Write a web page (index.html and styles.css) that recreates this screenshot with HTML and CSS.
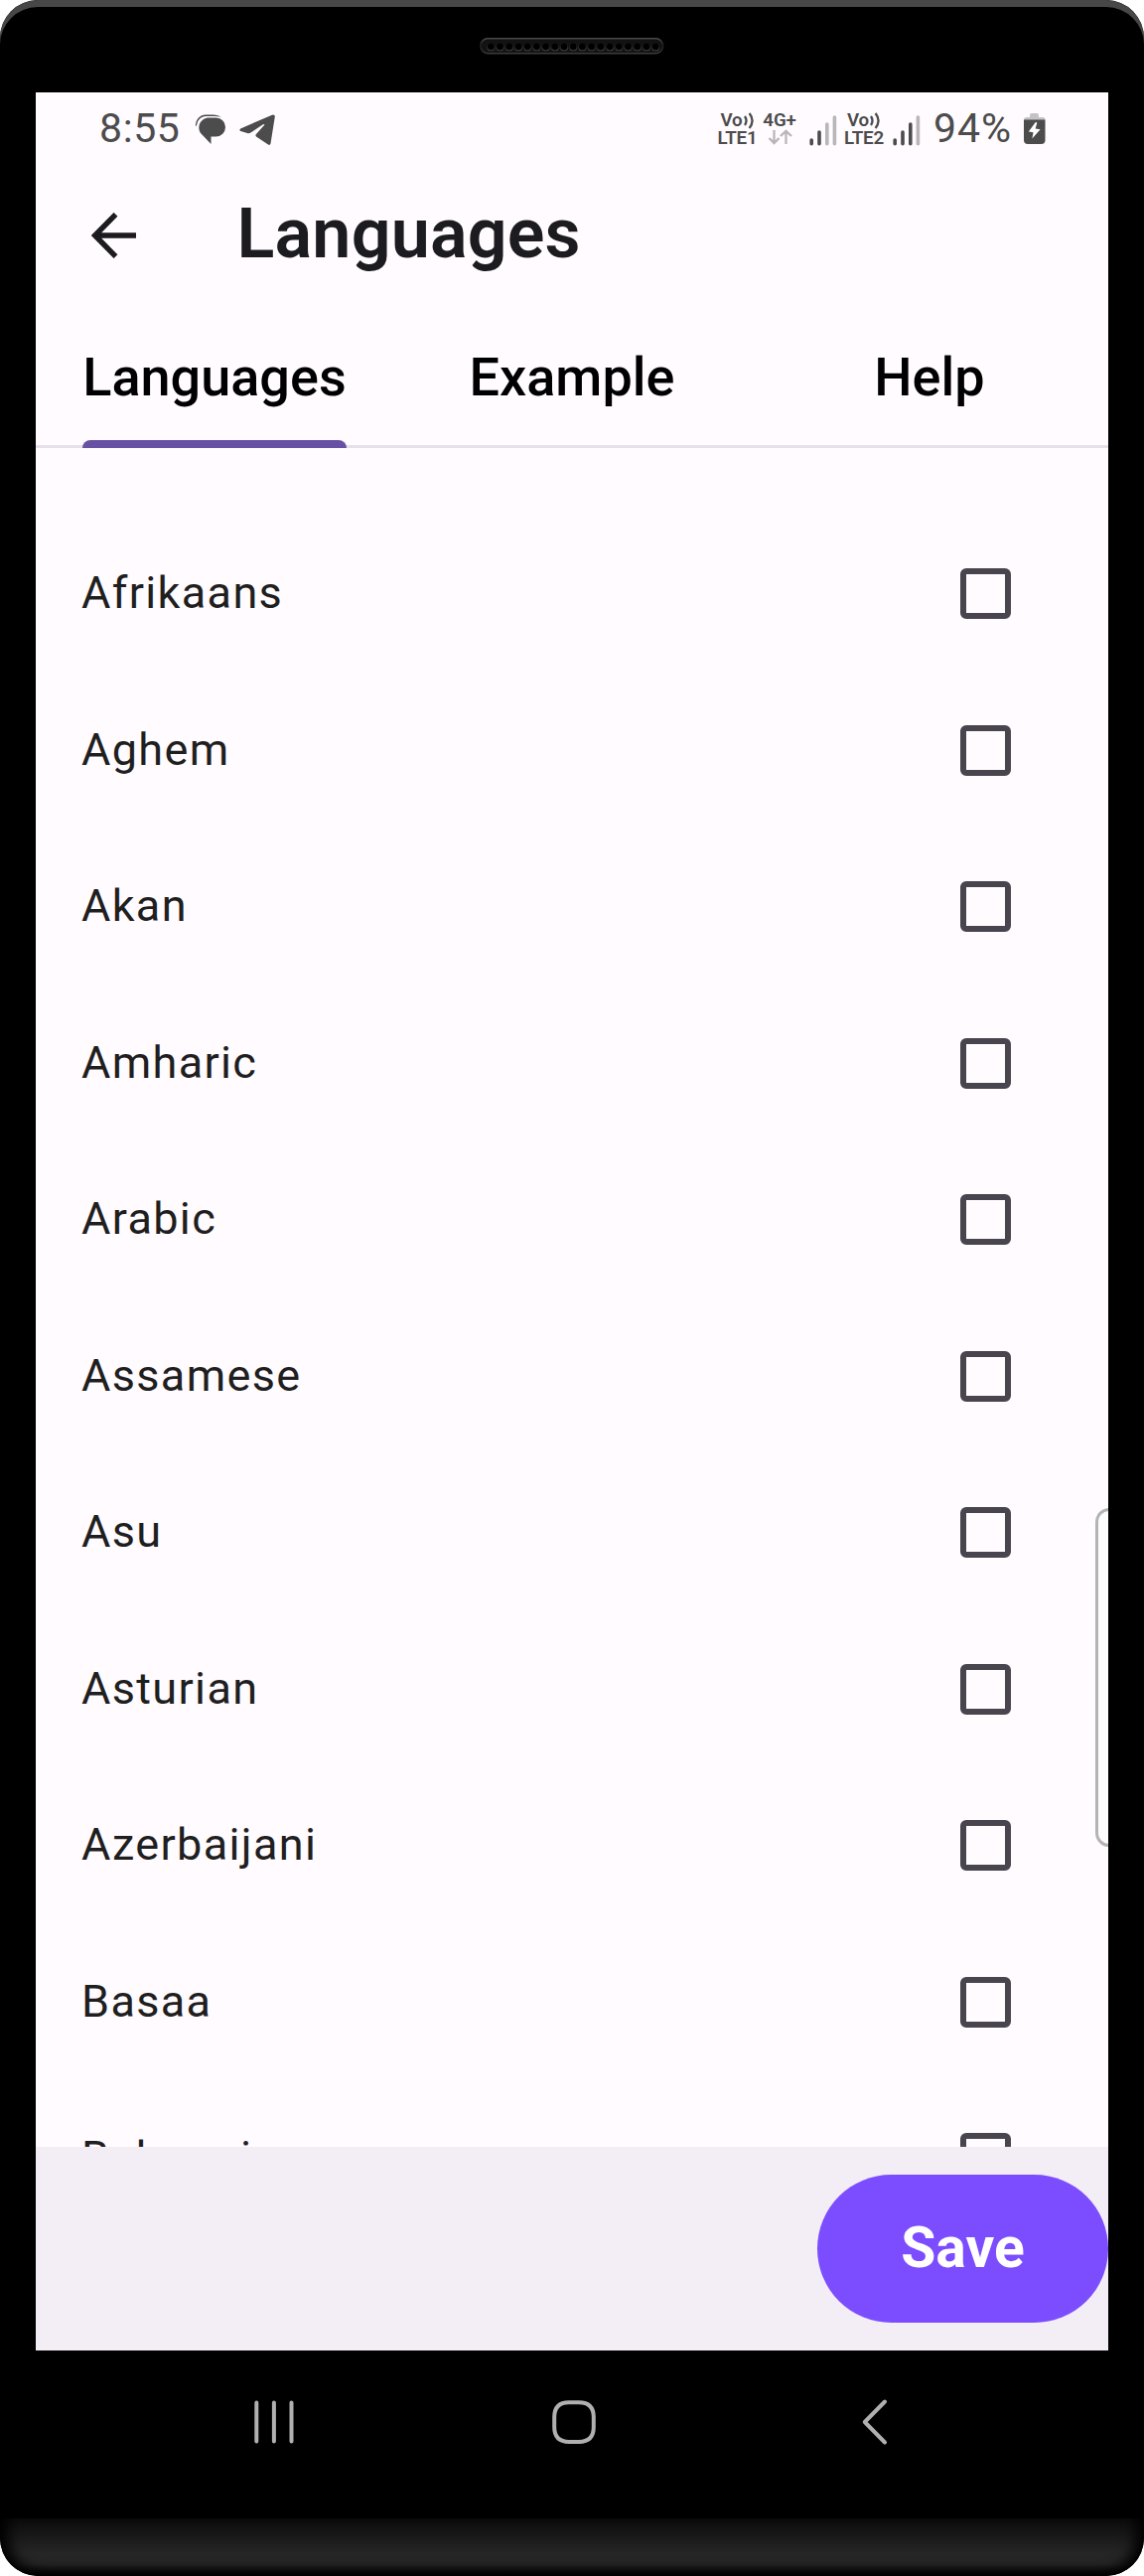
FILE: index.html
```html
<!DOCTYPE html>
<html lang="en">
<head>
<meta charset="utf-8">
<title>Languages</title>
<link rel="stylesheet" href="styles.css">
</head>
<body>
<div class="phone">
  <div class="bezel-top">
    <svg class="speaker" width="186" height="17" viewBox="0 0 186 17">
      <defs>
        <pattern id="holes" x="7" y="4" width="9.21" height="12" patternUnits="userSpaceOnUse">
          <circle cx="4.4" cy="5.4" r="3.9" fill="#4a4a4a"/>
          <circle cx="4.4" cy="4.8" r="3.6" fill="#000"/>
        </pattern>
        <linearGradient id="rim" x1="0" y1="0" x2="0" y2="1">
          <stop offset="0" stop-color="#4a4a4a"/><stop offset=".5" stop-color="#1c1c1c"/><stop offset="1" stop-color="#3c3c3c"/>
        </linearGradient>
      </defs>
      <rect x=".75" y=".75" width="184" height="15" rx="7.5" fill="#121212" stroke="url(#rim)" stroke-width="1.5"/>
      <rect x="7" y="4" width="174.9" height="10" fill="url(#holes)"/>
    </svg>
  </div>
  <main class="screen">
    <div class="status">
      <span class="clock">8:55</span>
      <svg class="chat" width="32" height="32" viewBox="0 0 32 32">
        <path d="M1 13.5 A10.5 10.5 0 0 1 11 1.5 H19 Q24 1.5 27 4.2 Q24 3 20 3 H12 A9.5 9.5 0 0 0 2.2 11.5Z" fill="#4c4c4c"/>
        <path d="M13 4.5 H21.5 A9.5 9.5 0 0 1 21.5 23.5 H16.5 V31 L6 20 A10 10 0 0 1 13 4.5Z" fill="#4c4c4c"/>
      </svg>
      <svg class="plane" width="36" height="32" viewBox="0 0 36 32">
        <path d="M1.2 14.4 L33 .7 Q36 0 35.8 2.5 L31.5 29.5 Q31 31.6 29 30.6 L17 22.4 Q15.8 21.2 17 20 L25.5 10.6 Q25 9.6 23.5 10.4 L11.5 18.6 Q10 19.5 8 19 L1.3 17 Q-.5 15.8 1.2 14.4Z" fill="#4c4c4c"/>
      </svg>
      <span class="grow"></span>
      <div class="net"><span class="volte">Vo<svg width="11" height="18" viewBox="0 0 11 18"><path d="M1 5 Q4 9.5 1 14 M5.6 2 Q11.5 9.5 5.6 17" fill="none" stroke="#4c4c4c" stroke-width="2.3"/></svg></span><span>LTE1</span></div>
      <div class="net data"><span>4G+</span>
        <svg width="25" height="16" viewBox="0 0 25 16"><path d="M6.5 1 V14 M1.5 9 L6.5 14 L11.5 9 M18.5 15 V2 M13 7 L18.5 1.8 L24 7" fill="none" stroke="#b8b6b9" stroke-width="2.3"/></svg></div>
      <svg class="bars b1" width="28" height="34" viewBox="0 0 28 34" fill="none" stroke-width="3.6" stroke-linecap="round">
        <path d="M2.2 27 V30.8 M10 19 V30.8" stroke="#4c4c4c"/><path d="M17.8 11 V30.8 M25.4 4 V30.8" stroke="#b8b6b9"/></svg>
      <div class="net net2"><span class="volte">Vo<svg width="11" height="18" viewBox="0 0 11 18"><path d="M1 5 Q4 9.5 1 14 M5.6 2 Q11.5 9.5 5.6 17" fill="none" stroke="#4c4c4c" stroke-width="2.3"/></svg></span><span>LTE2</span></div>
      <svg class="bars b2" width="28" height="34" viewBox="0 0 28 34" fill="none" stroke-width="3.6" stroke-linecap="round">
        <path d="M2.2 27 V30.8 M10 19 V30.8 M17.8 11 V30.8" stroke="#4c4c4c"/><path d="M25.4 4 V30.8" stroke="#b8b6b9"/></svg>
      <span class="pct">94%</span>
      <svg class="batt" width="22" height="31" viewBox="0 0 22 31">
        <path d="M6 4 V2 Q6 0 8 0 H13 Q15 0 15 2 V4 H19 Q21.5 4 21.5 7 H0 Q0 4 3 4Z" fill="#c4c2c5"/>
        <path d="M0 6.5 H21.5 V27 Q21.5 31 17.5 31 H4 Q0 31 0 27Z" fill="#4c4c4c"/>
        <path d="M11.8 9 L4.8 18.5 L9.5 19.2 L8.4 25.5 L16.6 16.2 L11.6 15.4 L13.4 9.4Z" fill="#fff"/>
      </svg>
    </div>
    <header class="appbar">
      <svg width="46" height="46" viewBox="0 0 46 46"><path d="M45 23 H4 M24.5 1.8 L3.6 23 L24.5 44.2" fill="none" stroke="#1c1b1f" stroke-width="5.4"/></svg>
      <h1>Languages</h1>
    </header>
    <nav class="tabs">
      <div class="tab active"><span>Languages</span></div>
      <div class="tab"><span>Example</span></div>
      <div class="tab"><span>Help</span></div>
    </nav>
    <div class="list">
      <div class="row"><span>Afrikaans</span><i class="box"></i></div>
      <div class="row"><span>Aghem</span><i class="box"></i></div>
      <div class="row"><span>Akan</span><i class="box"></i></div>
      <div class="row"><span>Amharic</span><i class="box"></i></div>
      <div class="row"><span>Arabic</span><i class="box"></i></div>
      <div class="row"><span>Assamese</span><i class="box"></i></div>
      <div class="row"><span>Asu</span><i class="box"></i></div>
      <div class="row"><span>Asturian</span><i class="box"></i></div>
      <div class="row"><span>Azerbaijani</span><i class="box"></i></div>
      <div class="row"><span>Basaa</span><i class="box"></i></div>
      <div class="row"><span>Belarusian</span><i class="box"></i></div>
    </div>
    <footer class="actions"><button class="save">Save</button></footer>
    <div class="edge-handle"></div>
  </main>
  <div class="navbar">
    <svg width="44" height="50" viewBox="0 0 44 50" fill="none" stroke="#b0b0b0" stroke-width="4" stroke-linecap="round"><path d="M4.3 5.5 V44.5 M21.9 5.5 V44.5 M39.5 5.5 V44.5"/></svg>
    <svg class="home" width="50" height="50" viewBox="0 0 50 50" fill="none" stroke="#b0b0b0" stroke-width="4"><path d="M20 5.2 H30 Q44.8 5.2 44.8 20 V30 Q44.8 44.9 30 44.9 H20 Q5.2 44.9 5.2 30 V20 Q5.2 5.2 20 5.2Z"/></svg>
    <svg width="34" height="50" viewBox="0 0 34 50" fill="none" stroke="#b0b0b0" stroke-width="4" stroke-linecap="round" stroke-linejoin="round"><path d="M27 4.5 L6.8 25 L27 45.5"/></svg>
  </div>
  <div class="chin"></div>
</div>
</body>
</html>
```
FILE: styles.css
```css
* { box-sizing: border-box; }
body { margin: 0; background: #fff; font-family: Roboto, "Liberation Sans", sans-serif; }
svg { display: block; flex: none; }
.phone { width: 1152px; height: 2593px; background: #000; border-radius: 38px; overflow: hidden; display: flex; flex-direction: column; }
.bezel-top { height: 93px; padding: 38px 0 0 483px; border-radius: 38px 38px 0 0; box-shadow: inset 0 7px 0 #474747; }
.screen { position: relative; width: 1080px; height: 2273px; margin: 0 36px; background: #fffbff; overflow: hidden; display: flex; flex-direction: column; }

.status { height: 72px; padding: 21px 63px 0 64px; display: flex; align-items: flex-start; color: #4c4c4c; }
.clock, .pct { font-size: 41px; line-height: 31px; font-weight: 400; white-space: nowrap; }
.clock { width: 96px; letter-spacing: .6px; }
.chat { margin-right: 13px; }
.plane { margin-top: 1px; }
.grow { flex: 1; }
.net { width: 40px; margin-top: -2px; font-size: 18.8px; line-height: 18px; font-weight: 600; letter-spacing: -.2px; display: flex; flex-direction: column; align-items: center; white-space: nowrap; }
.volte { display: flex; gap: 1px; }
.data { margin-left: 2.5px; }
.bars { margin-left: 10px; }
.net2 { margin-left: 7px; }
.b2 { margin-left: 9px; }
.pct { width: 88px; margin-left: 13px; letter-spacing: 1px; }
.batt { margin-left: 3px; }

.appbar { height: 140px; padding: 4px 0 0 56px; display: flex; align-items: center; gap: 100.5px; }
h1 { margin: -4px 0 0; font-size: 70px; line-height: 80px; font-weight: 600; letter-spacing: .2px; color: #1c1b1f; }
.tabs { height: 146px; display: grid; grid-template-columns: repeat(3, 360px); border-bottom: 3px solid #e7e0ec; font-size: 54px; font-weight: 500; color: #000; }
.tab { display: flex; justify-content: center; height: 146px; }
.tab span { position: relative; line-height: 150px; height: 146px; }
.active span::after { content: ""; position: absolute; left: 0; right: 0; bottom: 0; height: 8px; border-radius: 8px 8px 0 0; background: #6750a4; }
.list { height: 1710px; overflow: hidden; padding-top: 68px; }
.row { height: 157.5px; padding: 0 98px 0 46px; display: flex; align-items: center; justify-content: space-between; font-size: 45px; letter-spacing: 1.35px; color: #1f1f1f; }
.row span { padding-bottom: 2px; }
.box { width: 51px; height: 51px; border: 6px solid #49454f; border-radius: 6px; }
.actions { height: 205px; background: #f3eef5; display: flex; justify-content: flex-end; align-items: center; }
.save { width: 293px; height: 149px; border: 0; border-radius: 75px; background: #7c4dff; color: #fff; font: 700 57px Roboto, sans-serif; padding: 0 0 2px; }
.edge-handle { position: absolute; left: 1067px; top: 1425px; width: 40px; height: 341px; border: 3px solid #b4b4b4; border-radius: 14px; background: #fdfdfd; }

.navbar { height: 169px; padding: 47px 254px 0 254px; display: flex; justify-content: space-between; align-items: flex-start; }
.home { margin: 0 3px 0 -3px; }
.chin { height: 58px; border-radius: 0 0 38px 38px; background: linear-gradient(#0b0b0b, #262626 36px, #232323 46px, #000 58px); box-shadow: inset 14px -4px 14px -6px #000, inset -14px -4px 14px -6px #000; }
```
